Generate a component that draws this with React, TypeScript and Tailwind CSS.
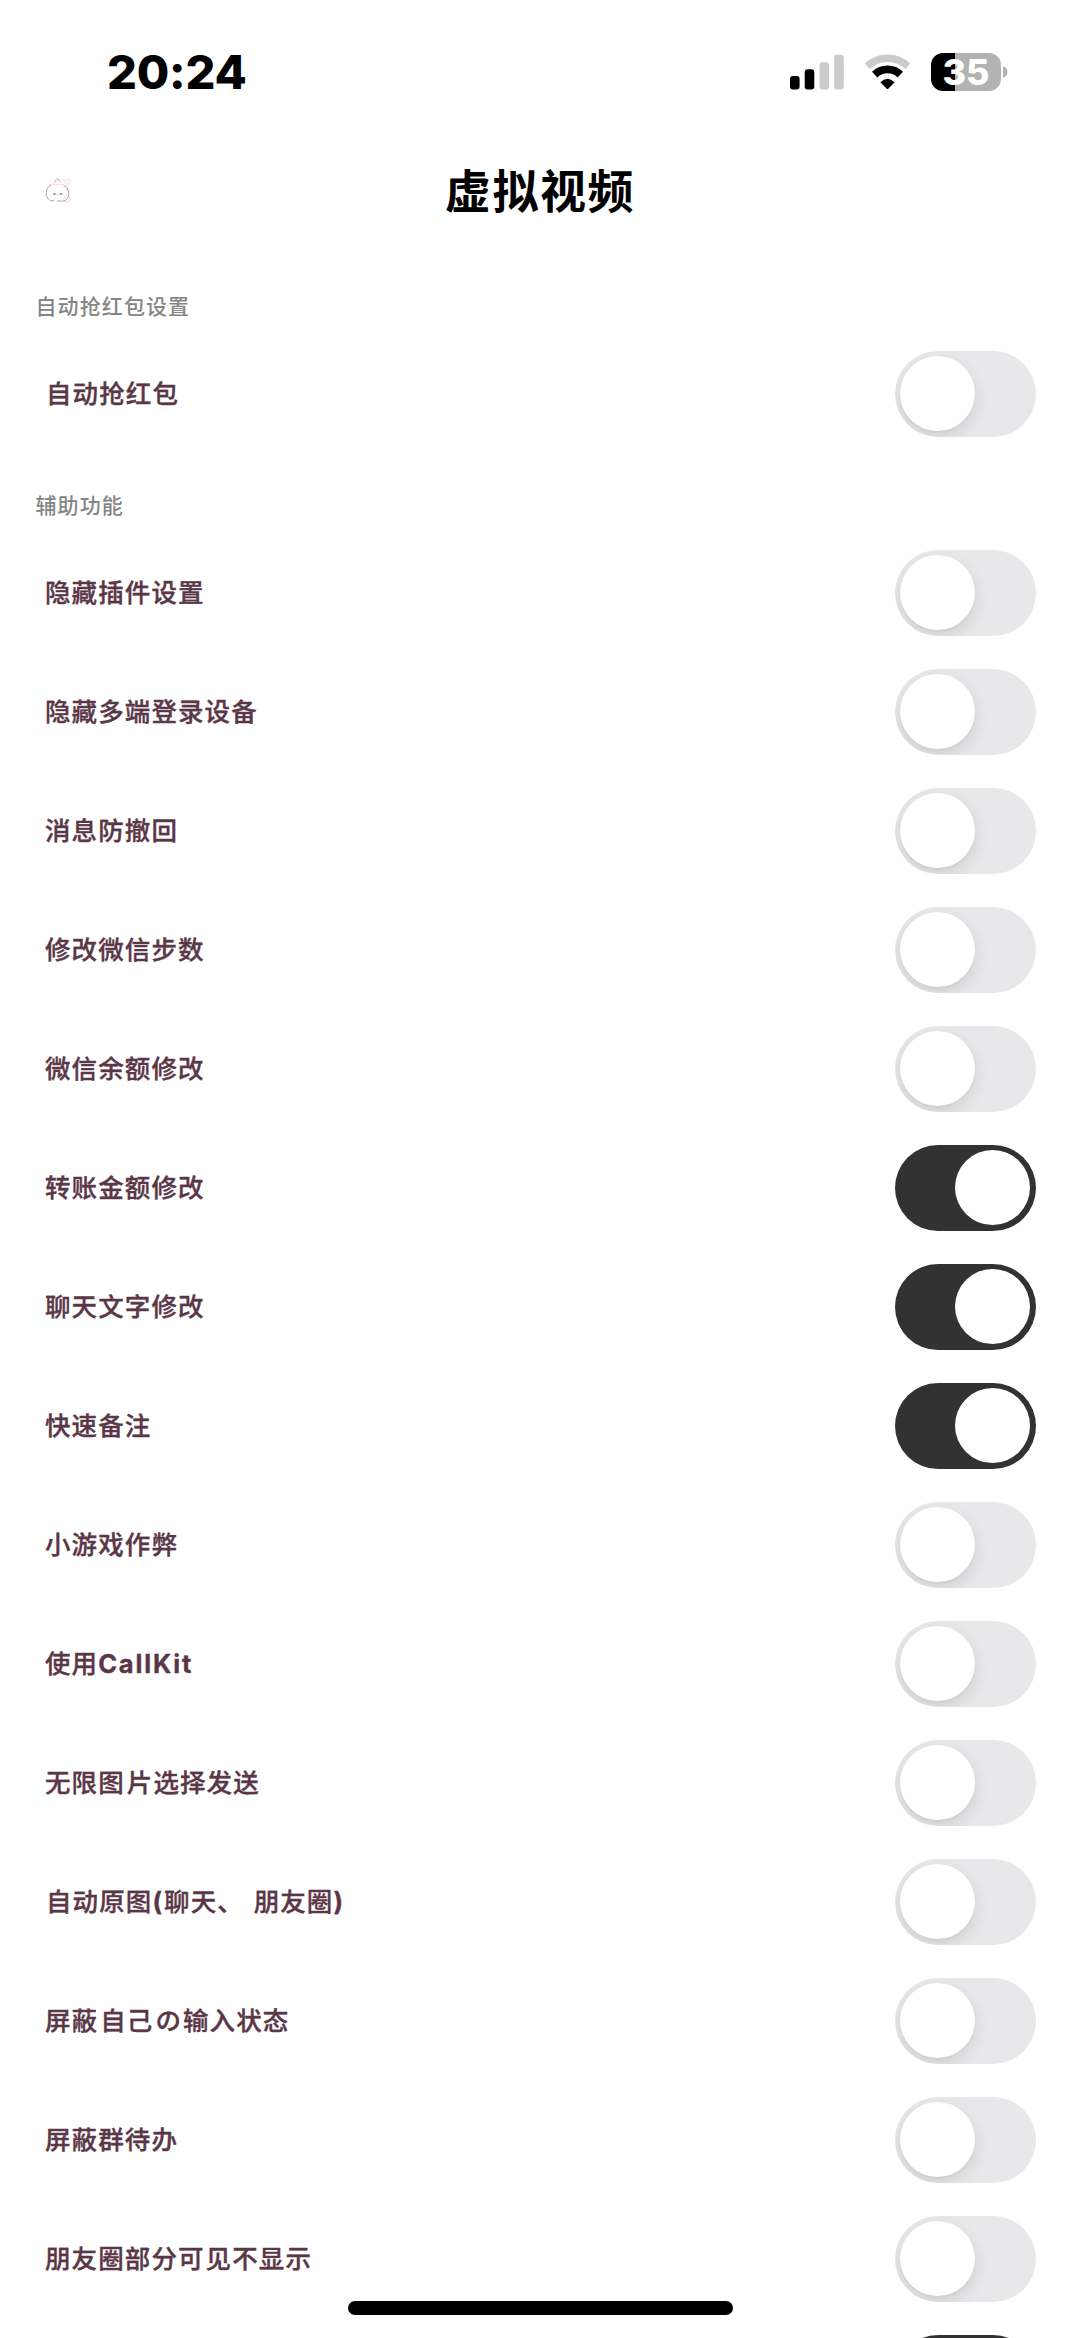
import React, { useState } from 'react';

interface SettingItem {
  label: React.ReactNode;
  on: boolean;
}

interface SettingSection {
  title: string;
  items: SettingItem[];
}

const SECTIONS: SettingSection[] = [
  {
    title: '自动抢红包设置',
    items: [{ label: <span className="ml-[1px]">自动抢红包</span>, on: false }],
  },
  {
    title: '辅助功能',
    items: [
      { label: '隐藏插件设置', on: false },
      { label: '隐藏多端登录设备', on: false },
      { label: '消息防撤回', on: false },
      { label: '修改微信步数', on: false },
      { label: '微信余额修改', on: false },
      { label: '转账金额修改', on: true },
      { label: '聊天文字修改', on: true },
      { label: '快速备注', on: true },
      { label: '小游戏作弊', on: false },
      { label: <>使用<span className="font-bold tracking-[1.8px]">CallKit</span></>, on: false },
      { label: <>无限图<span className="ml-[2px]">片选择发送</span></>, on: false },
      {
        label: (
          <span className="ml-[1px]">
            自动原图<span className="font-bold tracking-[2px]">(</span>聊天、<span className="tracking-[3px]"> </span>朋友圈<span className="font-bold">)</span>
          </span>
        ),
        on: false,
      },
      { label: <>屏蔽<span className="ml-[2px]">自己</span><span className="mr-[1px] ml-[2px]">の</span>输入状态</>, on: false },
      { label: '屏蔽群待办', on: false },
      { label: <>朋友圈部分可<span className="ml-[1px]">见不显示</span></>, on: false },
      { label: '', on: true },
    ],
  },
];

const SignalIcon: React.FC = () => (
  <svg width="54" height="36" viewBox="0 0 54 36">
    <rect x="0" y="22" width="9.6" height="13.5" rx="3" fill="#000" />
    <rect x="14.7" y="15.2" width="9.6" height="20.3" rx="3" fill="#000" />
    <rect x="29.5" y="8.2" width="9.6" height="27.3" rx="3" fill="#cbcbcb" />
    <rect x="44.2" y="0.8" width="9.6" height="34.7" rx="3" fill="#cbcbcb" />
  </svg>
);

const WifiIcon: React.FC = () => (
  <svg width="48" height="36" viewBox="0 0 48 36" fill="none">
    <path d="M3.2 12.3 A29.5 29.5 0 0 1 43.8 12.3" stroke="#cbcbcb" strokeWidth="7.4" />
    <path d="M10.7 20.6 A18.4 18.4 0 0 1 36.3 20.6" stroke="#000" strokeWidth="7.8" />
    <path d="M16.4 28.2 Q23.5 21.2 30.6 28.2 L24.5 34.6 Q23.5 35.6 22.5 34.6 Z" fill="#000" />
  </svg>
);

const BatteryIcon: React.FC = () => (
  <div className="flex items-center">
    <div className="flex h-[38px] w-[70px] items-center justify-center rounded-[12px] bg-[linear-gradient(to_right,#000_24px,#b3b3b3_24px)]">
      <span className="font-['Inter',sans-serif] text-[36px] leading-none font-extrabold text-white">35</span>
    </div>
    <svg className="ml-[2px]" width="5" height="12" viewBox="0 0 5 12">
      <path d="M0 0 C6 2.5 6 9.5 0 12 Z" fill="#b3b3b3" />
    </svg>
  </div>
);

const MascotIcon: React.FC = () => (
  <svg width="26" height="28" viewBox="0 0 26 28" fill="none">
    <path d="M4 7.5 H18" stroke="#fbdde2" strokeWidth="1" />
    <path d="M18.5 2.5 H24.5 V7.5 L20 5.5 Z" stroke="#fbdde2" strokeWidth="1" />
    <circle cx="22" cy="22" r="3" stroke="#fbdde2" strokeWidth="1.2" />
    <path
      d="M9 5.5 L12.5 1.5 L16 5.5 M6 8 C1 11 0 17 2.5 21 C3.5 23 6 24 9 24 M12 24 H19 C23.5 23 25 17 23 13 C22 10.5 20 9 18 8"
      stroke="#a89c9f"
      strokeWidth="1"
      strokeDasharray="4 0.6"
    />
    <path d="M8 17 H10.8 M14.6 17 H17.4" stroke="#5f5056" strokeWidth="1.2" />
    <path d="M11.8 17.2 Q12.7 18.4 13.6 17.2" stroke="#c79aa3" strokeWidth="0.8" />
  </svg>
);

const Toggle: React.FC<{ initial: boolean }> = ({ initial }) => {
  const [on, setOn] = useState(initial);

  return (
    <button
      role="switch"
      aria-checked={on}
      onClick={() => setOn(!on)}
      className={`flex h-[86px] w-[141px] shrink-0 items-center overflow-hidden rounded-full px-[5.5px] ${
        on ? 'justify-end bg-[#323232]' : 'justify-start bg-[#e8e8ea]'
      }`}
    >
      <span
        className={`size-[75px] rounded-full bg-white ${
          on ? '' : 'shadow-[0_6px_16px_rgba(0,0,0,0.11),0_2px_3px_rgba(0,0,0,0.03)]'
        }`}
      />
    </button>
  );
};

const SettingRow: React.FC<{ item: SettingItem }> = ({ item }) => (
  <div className="flex h-[119px] items-center justify-between pr-[44.5px] pl-[45px]">
    <span className="text-[25.5px] leading-none font-medium tracking-[1.1px] whitespace-pre text-[#5a3747] [-webkit-text-stroke:0.35px_#5a3747]">
      {item.label}
    </span>
    <Toggle initial={item.on} />
  </div>
);

export default function App() {
  return (
    <div className="flex h-[2338px] w-[1080px] flex-col overflow-hidden bg-white font-['Inter','Noto_Sans_CJK_SC',sans-serif]">
      <header className="flex h-[144px] shrink-0 items-center justify-between pr-[72px] pl-[107px]">
        <span className="pb-[1px] text-[47px] leading-none font-extrabold tracking-[-0.2px]">20:24</span>
        <div className="flex items-center">
          <SignalIcon />
          <div className="mr-[19px] ml-[20px]">
            <WifiIcon />
          </div>
          <BatteryIcon />
        </div>
      </header>

      <nav className="mb-[16px] grid h-[94px] shrink-0 grid-cols-[1fr_auto_1fr] items-center px-[45px]">
        <MascotIcon />
        <h1 className="text-[46px] leading-none font-bold tracking-[1.6px] text-black">虚拟视频</h1>
      </nav>

      <main className="flex flex-col">
        {SECTIONS.map((section) => (
          <section key={section.title}>
            <h2 className="flex h-[80px] items-center pt-[25px] pl-[35.5px] text-[21px] leading-none font-medium tracking-[1.1px] text-[#858585]">
              {section.title}
            </h2>
            {section.items.map((item, i) => (
              <SettingRow key={i} item={item} />
            ))}
          </section>
        ))}
      </main>

      <div className="fixed top-[2301px] left-[348px] h-[14px] w-[385px] rounded-full bg-black" />
    </div>
  );
}
